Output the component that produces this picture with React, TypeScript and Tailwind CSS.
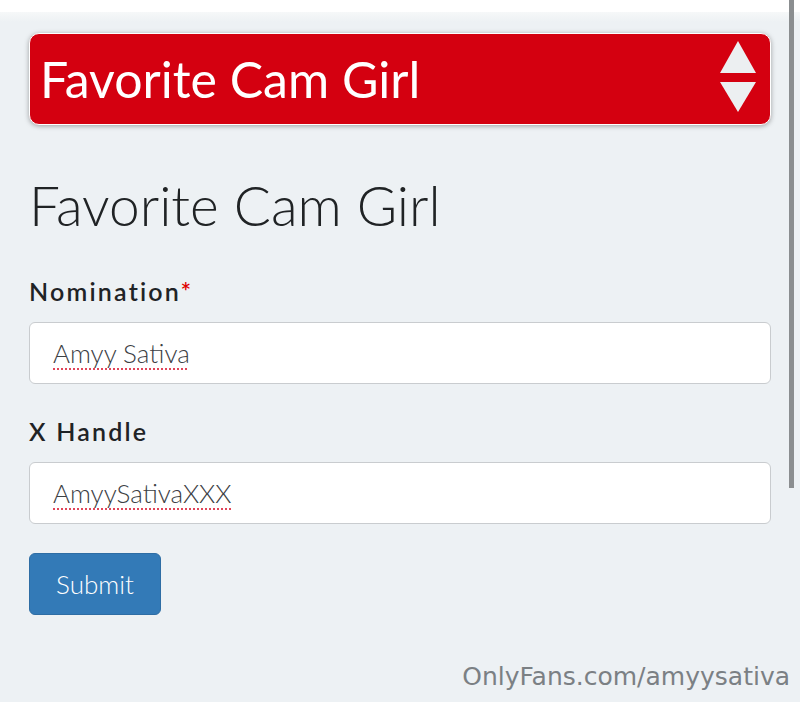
import React from 'react';

// Up/down chevrons drawn on the right side of the category picker
const SortArrows: React.FC = () => (
  <svg width="38" height="76" viewBox="0 0 38 76" className="shrink-0">
    <polygon points="19,0 37,32 1,32" fill="#eceff1" />
    <polygon points="1,41 37,41 19,71" fill="#eceff1" />
  </svg>
);

const Field: React.FC<{ label: string; value: string; required?: boolean }> = ({ label, value, required }) => (
  <div className="flex flex-col">
    <label className="text-[25px] leading-[30px] font-semibold tracking-[2.2px] text-[#1f2326]">
      {label}
      {required && <span className="text-[#e00000]">*</span>}
    </label>
    <div className="mt-[16px] h-[62px] rounded-[6px] border border-[#c9cccf] bg-white flex items-center px-[23px]">
      <span className="text-[26px] font-light text-[#3c4044] underline decoration-dotted decoration-[#e0455a] decoration-2 underline-offset-[6px]">
        {value}
      </span>
    </div>
  </div>
);

export default function App() {
  return (
    <div
      className="relative w-full h-[702px] overflow-hidden bg-[#edf1f4]"
      style={{ fontFamily: 'Lato, "Open Sans", sans-serif' }}
    >
      {/* browser strip + fade into page */}
      <div className="h-[12px] bg-white" />
      <div className="h-[10px] bg-gradient-to-b from-[#f6f8f9] to-[#edf1f4]" />

      <div className="px-[29px]">
        {/* category picker */}
        <div className="mt-[11px] h-[92px] rounded-[10px] border border-white bg-[#d40010] shadow-[0_1px_5px_rgba(0,0,0,0.35)] flex items-center justify-between pl-[10px] pr-[13px]">
          <span className="text-[50px] leading-none text-white">Favorite Cam Girl</span>
          <SortArrows />
        </div>

        <h1 className="mt-[50px] text-[55px] leading-[60px] font-light text-[#202325]">Favorite Cam Girl</h1>

        <div className="mt-[41px] flex flex-col gap-[32px]">
          <Field label="Nomination" value="Amyy Sativa" required />
          <Field label="X Handle" value="AmyySativaXXX" />
        </div>

        <button className="mt-[29px] h-[62px] w-[132px] rounded-[6px] border border-[#2e6da4] bg-[#337ab7] text-[26px] font-light text-white">
          Submit
        </button>
      </div>

      {/* scrollbar thumb */}
      <div className="absolute right-[6px] top-0 h-[488px] w-[5px] bg-[#8b8e90]" />

      {/* watermark */}
      <div
        className="absolute right-[10px] bottom-[7px] text-[25px] text-[#7b8084]"
        style={{ fontFamily: '"DejaVu Sans", sans-serif' }}
      >
        OnlyFans.com/amyysativa
      </div>
    </div>
  );
}
